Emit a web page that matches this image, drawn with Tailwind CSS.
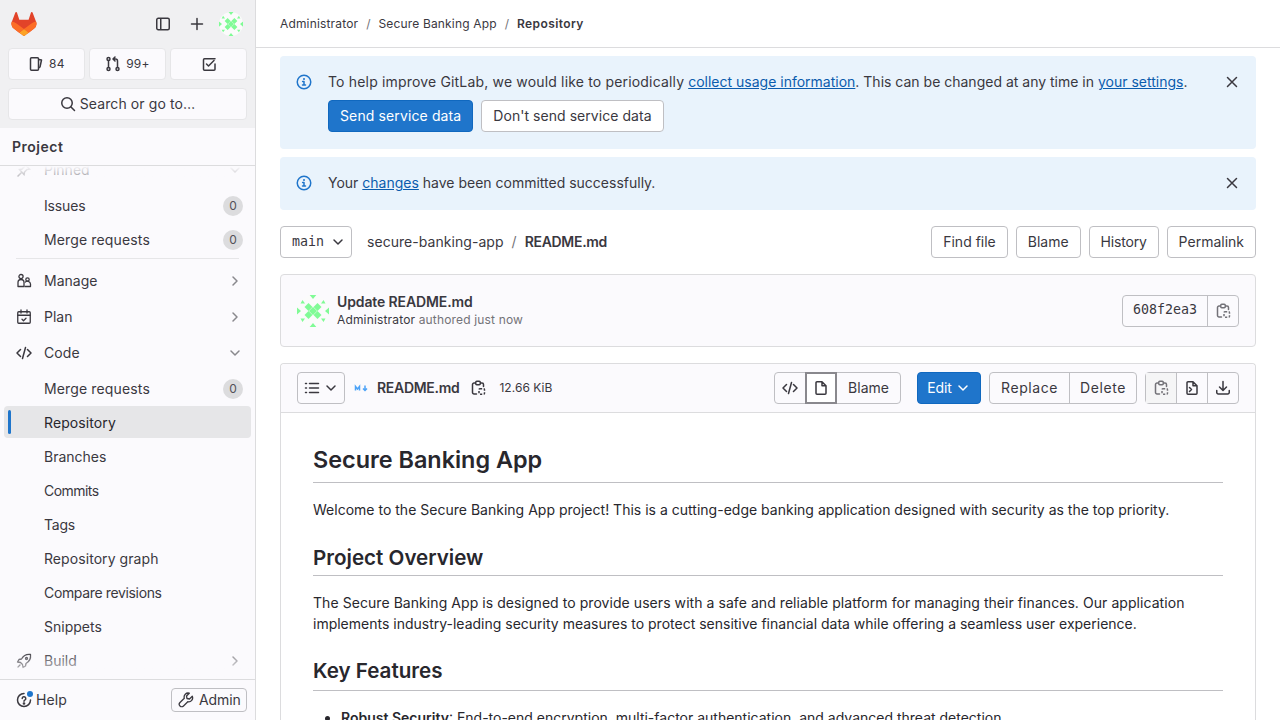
<!DOCTYPE html>
<html lang="en">
<head>
    <meta charset="UTF-8">
    <title>README.md - Repository</title>
    <script src="https://cdn.jsdelivr.net/npm/@tailwindcss/browser@4"></script>
</head>
<body class="h-[720px] overflow-hidden bg-white font-['Inter',sans-serif] text-sm text-[#3a383f]">
    <!-- shared icons -->
    <svg class="hidden">
        <defs>
            <symbol id="i-chev-r" viewBox="0 0 16 16"><path d="M6 4l4 4-4 4" fill="none" stroke="currentColor" stroke-width="1.5" stroke-linecap="round" stroke-linejoin="round"/></symbol>
            <symbol id="i-chev-d" viewBox="0 0 16 16"><path d="M4 6l4 4 4-4" fill="none" stroke="currentColor" stroke-width="1.5" stroke-linecap="round" stroke-linejoin="round"/></symbol>
            <symbol id="i-info" viewBox="0 0 16 16"><circle cx="8" cy="8" r="6.75" fill="none" stroke="currentColor" stroke-width="1.5"/><path d="M6.6 7.4H8v3.6M6.5 11h3" fill="none" stroke="currentColor" stroke-width="1.5" stroke-linecap="round" stroke-linejoin="round"/><circle cx="8" cy="5" r="1" fill="currentColor"/></symbol>
            <symbol id="i-close" viewBox="0 0 16 16"><path d="M3.5 3.5l9 9M12.5 3.5l-9 9" fill="none" stroke="currentColor" stroke-width="1.5" stroke-linecap="round"/></symbol>
            <symbol id="i-code" viewBox="0 0 16 16"><path d="M4.5 4.5L1 8l3.5 3.5M11.5 4.5L15 8l-3.5 3.5M9.5 2.5l-3 11" fill="none" stroke="currentColor" stroke-width="1.5" stroke-linecap="round" stroke-linejoin="round"/></symbol>
            <symbol id="i-copy" viewBox="0 0 16 16"><path d="M5 3H4a1.500 1.500 0 0 0-1.500 1.500v8A1.500 1.500 0 0 0 4 14h2.500M11 3h1a1.500 1.500 0 0 1 1.500 1.500V6.500" fill="none" stroke="currentColor" stroke-width="1.5" stroke-linecap="round"/><rect x="5.750" y="1.250" width="4.500" height="3.500" rx="1" fill="none" stroke="currentColor" stroke-width="1.5"/><rect x="9" y="8.750" width="5.500" height="5.500" rx="1" fill="none" stroke="currentColor" stroke-width="1.5" stroke-dasharray="2.200 1.500"/></symbol>
            <symbol id="i-avatar" viewBox="0 0 32 32"><circle cx="16" cy="16" r="16" fill="#fbfbfb"/><g fill="#80fb96"><path d="M12.700 0h6.600L16 4zM0 12.500L4 16l-4 3.500zM32 12.500L28 16l4 3.500zM12.700 32h6.600L16 28zM3.500 8.500h4.500L5.500 5zM24 8.500h4.500L26.500 5zM3.500 23.500h4.500L5.500 27zM24 23.500h4.500L26.500 27z"/><path d="M11.500 8l4 4-4 4-4-4zM20.500 8l4 4-4 4-4-4zM11.500 16l4 4-4 4-4-4zM20.500 16l4 4-4 4-4-4zM16 12l4 4-4 4-4-4z"/></g></symbol>
        </defs>
    </svg>

    <div class="flex h-[720px]">
        <!-- Sidebar -->
        <aside class="flex h-full w-[256px] shrink-0 flex-col border-r border-[#dcdcde] bg-[#fbfafd]">
            <div class="h-[128px] shrink-0 bg-[#f0f0f2] px-2">
                <div class="flex h-[48px] items-center justify-between pl-[3px] pr-[4px]">
                    <svg class="h-6 w-[26px]" viewBox="0 0 25 24"><path d="m24.507 9.5-.034-.09L21.082.562a.896.896 0 0 0-1.694.091l-2.29 7.01H7.825L5.535.653a.898.898 0 0 0-1.694-.09L.451 9.411.416 9.5a6.297 6.297 0 0 0 2.09 7.278l.012.01.03.022 5.16 3.867 2.56 1.935 1.554 1.176a1.051 1.051 0 0 0 1.268 0l1.555-1.176 2.56-1.935 5.197-3.89.014-.01A6.297 6.297 0 0 0 24.507 9.5Z" fill="#E24329"/><path d="m24.507 9.5-.034-.09a11.44 11.44 0 0 0-4.56 2.051l-7.447 5.632 4.742 3.584 5.197-3.89.014-.01A6.297 6.297 0 0 0 24.507 9.5Z" fill="#FC6D26"/><path d="m7.707 20.677 2.56 1.935 1.555 1.176a1.051 1.051 0 0 0 1.268 0l1.555-1.176 2.56-1.935-4.743-3.584-4.755 3.584Z" fill="#FCA326"/><path d="M5.01 11.461a11.43 11.43 0 0 0-4.56-2.05L.416 9.5a6.297 6.297 0 0 0 2.09 7.278l.012.01.03.022 5.16 3.867 4.745-3.584-7.444-5.632Z" fill="#FC6D26"/></svg>
                    <div class="flex items-center gap-[18px]">
                        <svg class="h-4 w-4" viewBox="0 0 16 16" fill="none" stroke="currentColor" stroke-width="1.5"><rect x="1.75" y="2.25" width="12.5" height="11.5" rx="1.5"/><path d="M5.75 2.25v11.5"/></svg>
                        <svg class="h-4 w-4" viewBox="0 0 16 16" fill="none" stroke="currentColor" stroke-width="1.5" stroke-linecap="round"><path d="M8 2.5v11M2.5 8h11"/></svg>
                        <svg class="-ml-1 h-6 w-6"><use href="#i-avatar"/></svg>
                    </div>
                </div>
                <div class="grid grid-cols-3 gap-1">
                    <div class="flex h-[32px] items-center justify-center gap-[5px] rounded border border-[#e6e6e8] bg-[#fbfafd] text-xs tracking-[0.3px]">
                        <svg class="h-4 w-4" viewBox="0 0 16 16" fill="none" stroke="currentColor" stroke-width="1.5" stroke-linejoin="round"><path d="M3.5 1.75h6a1 1 0 0 1 1 1v10.5a1 1 0 0 1-1 1h-6a1 1 0 0 1-1-1V2.75a1 1 0 0 1 1-1z"/><path d="M10.5 3.5l3 .5-1.5 7-1.5 1"/></svg>84
                    </div>
                    <div class="flex h-[32px] items-center justify-center gap-[5px] rounded border border-[#e6e6e8] bg-[#fbfafd] text-xs tracking-[0.3px]">
                        <svg class="h-4 w-4" viewBox="0 0 16 16" fill="none" stroke="currentColor" stroke-width="1.5" stroke-linecap="round" stroke-linejoin="round"><circle cx="3.5" cy="3" r="1.5"/><circle cx="3.5" cy="13" r="1.5"/><circle cx="12.5" cy="13" r="1.5"/><path d="M3.5 4.5v7M12.5 11.5V5a2 2 0 0 0-2-2H8.5M10 1L8 3l2 2"/></svg>99+
                    </div>
                    <div class="flex h-[32px] items-center justify-center rounded border border-[#e6e6e8] bg-[#fbfafd]">
                        <svg class="h-4 w-4" viewBox="0 0 16 16" fill="none" stroke="currentColor" stroke-width="1.5" stroke-linecap="round" stroke-linejoin="round"><path d="M14 2.75H3.5a1 1 0 0 0-1 1v9.5a1 1 0 0 0 1 1h9.5a1 1 0 0 0 1-1V8"/><path d="M5.5 8l2 2 5.5-5.5"/></svg>
                    </div>
                </div>
                <div class="mt-2 flex h-[32px] items-center justify-center gap-[4px] rounded border border-[#e6e6e8] bg-[#fbfafd] tracking-[0.1px]">
                    <svg class="h-4 w-4" viewBox="0 0 16 16" fill="none" stroke="currentColor" stroke-width="1.5" stroke-linecap="round"><circle cx="7" cy="7" r="5.25"/><path d="M11 11l3.5 3.5"/></svg>Search or go to…
                </div>
            </div>
            <div class="flex h-[38px] shrink-0 items-center border-b border-[#dcdcde] px-3 text-sm font-semibold tracking-[0.5px]">Project</div>

            <!-- Nav (scrolled) -->
            <div class="relative min-h-0 flex-1 overflow-hidden">
                <nav class="-mt-[13px] px-1">
                    <div class="mb-[2px] flex h-[34px] items-center rounded pl-3 pr-2">
                        <svg class="mr-3 h-4 w-4 text-[#737278]" viewBox="0 0 16 16" fill="none" stroke="currentColor" stroke-width="1.5" stroke-linecap="round"><path d="M9 2.5l4.5 4.5-2.5.5-2.5 2.5-.5 2.5L3.5 7.5 6 7l2.5-2.5zM5.5 10.5L2 14"/></svg>
                        <span class="flex-1">Pinned</span>
                        <svg class="h-4 w-4 text-[#89888d]"><use href="#i-chev-d"/></svg>
                    </div>
                    <a class="flex h-[34px] items-center pl-10 pr-2 tracking-[-0.15px]">Issues<span class="ml-auto flex h-5 min-w-5 items-center justify-center rounded-full bg-[#dcdcde] text-xs text-[#535158]">0</span></a>
                    <a class="flex h-[34px] items-center pl-10 pr-2 tracking-[0.14px]">Merge requests<span class="ml-auto flex h-5 min-w-5 items-center justify-center rounded-full bg-[#dcdcde] text-xs text-[#535158]">0</span></a>
                    <div class="mx-3 mt-[1px] mb-[4px] h-px bg-[#e6e6e8]"></div>
                    <a class="flex h-[36px] items-center pl-3 pr-2">
                        <svg class="mr-3 h-4 w-4" viewBox="0 0 16 16" fill="none" stroke="currentColor" stroke-width="1.3" stroke-linejoin="round"><circle cx="5" cy="3.600" r="2.100"/><path d="M2 13.500V9.500a3 3 0 0 1 6 0v4z"/><circle cx="11.500" cy="6.500" r="1.700"/><path d="M8.500 13.500h6v-2.500a3 3 0 0 0-5.500-1.500"/></svg>
                        <span class="flex-1">Manage</span><svg class="h-4 w-4 text-[#89888d]"><use href="#i-chev-r"/></svg>
                    </a>
                    <a class="flex h-[36px] items-center pl-3 pr-2">
                        <svg class="mr-3 h-4 w-4" viewBox="0 0 16 16" fill="none" stroke="currentColor" stroke-width="1.3" stroke-linecap="round" stroke-linejoin="round"><rect x="1.75" y="2.75" width="12.5" height="11.5" rx="1"/><path d="M1.75 6.25h12.5M5 1v3M11 1v3M6 10.25l1.5 1.5 2.5-2.5"/></svg>
                        <span class="flex-1">Plan</span><svg class="h-4 w-4 text-[#89888d]"><use href="#i-chev-r"/></svg>
                    </a>
                    <a class="mb-px flex h-[36px] items-center pl-3 pr-2">
                        <svg class="mr-3 h-4 w-4"><use href="#i-code"/></svg>
                        <span class="flex-1 tracking-[0.1px]">Code</span><svg class="h-4 w-4 text-[#89888d]"><use href="#i-chev-d"/></svg>
                    </a>
                    <a class="flex h-[34px] items-center pl-10 pr-2 tracking-[0.14px]">Merge requests<span class="ml-auto flex h-5 min-w-5 items-center justify-center rounded-full bg-[#dcdcde] text-xs text-[#535158]">0</span></a>
                    <a class="relative mb-[2px] flex h-8 items-center rounded bg-[#e6e6e8] pl-10 pr-2 pt-[2px] tracking-[0.1px] text-[#28272d]"><span class="absolute left-1 top-1 h-6 w-[3px] rounded-full bg-[#1f75cb]"></span>Repository</a>
                    <a class="flex h-[34px] items-center pl-10">Branches</a>
                    <a class="flex h-[34px] items-center pl-10 tracking-[-0.55px]">Commits</a>
                    <a class="flex h-[34px] items-center pl-10 tracking-[-0.2px]">Tags</a>
                    <a class="flex h-[34px] items-center pl-10 tracking-[0.07px]">Repository graph</a>
                    <a class="flex h-[34px] items-center pl-10 tracking-[-0.35px]">Compare revisions</a>
                    <a class="flex h-[34px] items-center pl-10">Snippets</a>
                    <a class="flex h-[34px] items-center pl-3 pr-2">
                        <svg class="mr-3 h-4 w-4" viewBox="0 0 16 16" fill="none" stroke="currentColor" stroke-width="1.3" stroke-linejoin="round" stroke-linecap="round"><path d="M14.5 1.5c-4-.5-7 1-9 4.5L3 6.5 1.5 9l3 .5 2 2 .5 3L9.5 13l.5-2.5c3.500-2 5-5 4.500-9z"/><circle cx="10.500" cy="5.500" r="1"/><path d="M2 14l2-2"/></svg>
                        <span class="flex-1">Build</span><svg class="h-4 w-4 text-[#89888d]"><use href="#i-chev-r"/></svg>
                    </a>
                </nav>
                <div class="absolute inset-x-0 top-0 h-[24px] bg-gradient-to-b from-[#fbfafd] to-[#fbfafd]/0"></div>
                <div class="absolute inset-x-0 bottom-0 h-[28px] bg-gradient-to-t from-[#fbfafd] to-[#fbfafd]/0"></div>
            </div>

            <div class="flex h-[41px] shrink-0 items-center justify-between border-t border-[#dcdcde] pl-4 pr-2">
                <div class="flex items-center gap-[4px] tracking-[0.1px]">
                    <span class="relative h-4 w-4">
                        <svg class="h-4 w-4" viewBox="0 0 16 16" fill="none" stroke="currentColor" stroke-width="1.5" stroke-linecap="round"><path d="M14.5 8A6.500 6.500 0 1 1 8 1.500"/><path d="M6.200 6.500A1.800 1.800 0 1 1 8.800 8.100c-.5.300-.8.700-.8 1.200"/><circle cx="8" cy="11.500" r=".6" fill="currentColor"/></svg>
                        <span class="absolute -right-[1px] -top-[1px] h-[6px] w-[6px] rounded-full bg-[#1f75cb]"></span>
                    </span>
                    Help
                </div>
                <div class="flex h-6 w-[76px] items-center gap-[5px] rounded border border-[#bfbfc3] pl-[6px] tracking-[-0.1px]">
                    <svg class="h-4 w-4" viewBox="0 0 16 16" fill="none" stroke="currentColor" stroke-width="1.3" stroke-linejoin="round"><path d="M14.300 4.200l-2.800 2.800-2.500-.5-.5-2.500 2.800-2.800a4 4 0 0 0-5 5L2 10.500a2.400 2.400 0 0 0 3.500 3.500l4.300-4.300a4 4 0 0 0 4.500-5.500z"/></svg>
                    Admin
                </div>
            </div>
        </aside>

        <!-- Main -->
        <main class="min-w-0 flex-1 overflow-hidden">
            <div class="flex h-[48px] items-center gap-2 border-b border-[#dcdcde] px-6 text-xs">
                <span class="tracking-[0.16px]">Administrator</span><span class="text-[#737278]">/</span>
                <span class="tracking-[0.16px]">Secure Banking App</span><span class="text-[#737278]">/</span>
                <span class="font-semibold tracking-[0.4px]">Repository</span>
            </div>
            <div class="px-6 pt-2">
                <!-- Alerts -->
                <div class="flex rounded bg-[#e9f3fc] pb-[17px] pl-4 pr-4 pt-[15px]">
                    <svg class="mr-4 mt-[3px] h-4 w-4 shrink-0 text-[#1f75cb]"><use href="#i-info"/></svg>
                    <div class="flex-1">
                        <p class="leading-[21px]"><span class="tracking-[0.17px]">To help improve GitLab, we would like to periodically</span> <a class="text-[#0b5cad] underline">collect usage information</a>. This can be changed at any time in <a class="text-[#0b5cad] underline">your settings</a>.</p>
                        <div class="mt-2 flex gap-2">
                            <button class="h-8 rounded border border-[#1068bf] bg-[#1f75cb] px-[11px] tracking-[0.12px] text-white">Send service data</button>
                            <button class="h-8 rounded border border-[#bfbfc3] bg-white px-[11px] tracking-[0.05px]">Don't send service data</button>
                        </div>
                    </div>
                    <svg class="mt-[3px] h-4 w-4 shrink-0"><use href="#i-close"/></svg>
                </div>
                <div class="mt-2 flex items-start rounded bg-[#e9f3fc] pb-[17px] pl-4 pr-4 pt-[15px]">
                    <svg class="mr-4 mt-[3px] h-4 w-4 shrink-0 text-[#1f75cb]"><use href="#i-info"/></svg>
                    <p class="flex-1 leading-[21px]">Your <a class="text-[#0b5cad] underline">changes</a> have been committed successfully.</p>
                    <svg class="mt-[3px] h-4 w-4 shrink-0"><use href="#i-close"/></svg>
                </div>

                <!-- Tree row -->
                <div class="mt-4 flex h-8 items-center">
                    <div class="flex h-8 w-[72px] items-center justify-between rounded border border-[#bfbfc3] pl-[11px] pr-[5px] font-['DejaVu_Sans_Mono',monospace] text-[13.3px]">main<svg class="h-4 w-4"><use href="#i-chev-d"/></svg></div>
                    <div class="ml-[15px] flex gap-2"><span class="tracking-[0.05px]">secure-banking-app</span><span class="text-[#737278]">/</span><span class="font-semibold tracking-[-0.3px]">README.md</span></div>
                    <div class="ml-auto flex gap-2">
                        <button class="h-8 rounded border border-[#bfbfc3] px-[11px]">Find file</button>
                        <button class="h-8 rounded border border-[#bfbfc3] px-[11px]">Blame</button>
                        <button class="h-8 w-[70px] rounded border border-[#bfbfc3] tracking-[-0.2px]">History</button>
                        <button class="h-8 rounded border border-[#bfbfc3] px-[11px]">Permalink</button>
                    </div>
                </div>

                <!-- Commit -->
                <div class="mt-4 flex h-[73px] items-center rounded border border-[#dcdcde] bg-[#fbfafd] pl-4 pr-4">
                    <svg class="h-8 w-8 shrink-0"><use href="#i-avatar"/></svg>
                    <div class="ml-2">
                        <div class="font-semibold leading-[18px] tracking-[-0.12px]">Update README.md</div>
                        <div class="text-xs leading-[18px] tracking-[0.16px]">Administrator <span class="text-[#737278]">authored just now</span></div>
                    </div>
                    <div class="ml-auto flex h-8 rounded border border-[#bfbfc3] bg-[#fbfafd]">
                        <span class="flex w-[85px] items-center justify-center border-r border-[#bfbfc3] font-['DejaVu_Sans_Mono',monospace] text-[13.3px]">608f2ea3</span>
                        <span class="flex w-[30px] items-center justify-center text-[#737278]"><svg class="h-4 w-4"><use href="#i-copy"/></svg></span>
                    </div>
                </div>

                <!-- File -->
                <div class="mt-4 rounded-t border border-b-0 border-[#dcdcde]">
                    <div class="flex h-[49px] items-center rounded-t border-b border-[#dcdcde] bg-[#fbfafd] px-4">
                        <div class="flex h-8 w-12 items-center justify-center gap-[3px] rounded border border-[#bfbfc3]">
                            <svg class="h-4 w-4" viewBox="0 0 16 16" fill="none" stroke="currentColor" stroke-width="1.5" stroke-linecap="round"><path d="M5.500 3.500h9M5.500 8h9M5.500 12.500h9M1.500 3.500h1M1.500 8h1M1.500 12.500h1"/></svg>
                            <svg class="h-4 w-4"><use href="#i-chev-d"/></svg>
                        </div>
                        <svg class="ml-[9px] h-4 w-4 text-[#4da3f7]" viewBox="0 0 16 16" fill="none" stroke="currentColor" stroke-width="1.500"><path d="M1.500 10.500v-4l2 2.500 2-2.500v4M11 5.500v4.500M9 8.500l2 2 2-2"/></svg>
                        <span class="ml-[7px] font-semibold tracking-[-0.3px]">README.md</span>
                        <svg class="ml-[11px] h-4 w-4"><use href="#i-copy"/></svg>
                        <span class="ml-[13px] text-xs tracking-[0.05px]">12.66 KiB</span>

                        <div class="ml-auto flex h-8 rounded border border-[#bfbfc3]">
                            <span class="flex w-[30px] items-center justify-center"><svg class="h-4 w-4"><use href="#i-code"/></svg></span>
                            <span class="-my-px flex w-8 items-center justify-center border-2 border-[#89888d] bg-white"><svg class="h-4 w-4" viewBox="0 0 16 16" fill="none" stroke="currentColor" stroke-width="1.5" stroke-linejoin="round"><path d="M9 1.750H4a1 1 0 0 0-1 1v10.500a1 1 0 0 0 1 1h8a1 1 0 0 0 1-1V5.750zM9 1.750v4h4"/></svg></span>
                            <span class="flex w-[63px] items-center justify-center">Blame</span>
                        </div>
                        <button class="ml-4 flex h-8 w-16 items-center justify-center gap-[3px] rounded border border-[#1068bf] bg-[#1f75cb] text-white tracking-[-0.1px]">Edit<svg class="h-4 w-4"><use href="#i-chev-d"/></svg></button>
                        <div class="ml-2 flex h-8 rounded border border-[#bfbfc3]">
                            <span class="flex w-[80px] items-center justify-center border-r border-[#bfbfc3] tracking-[0.55px]">Replace</span>
                            <span class="flex w-[66px] items-center justify-center tracking-[0.6px]">Delete</span>
                        </div>
                        <div class="ml-2 flex h-8 rounded border border-[#bfbfc3]">
                            <span class="flex w-[31px] items-center justify-center border-r border-[#bfbfc3] bg-[#f5f5f6] text-[#737278]"><svg class="h-4 w-4"><use href="#i-copy"/></svg></span>
                            <span class="flex w-[31px] items-center justify-center border-r border-[#bfbfc3]"><svg class="h-4 w-4" viewBox="0 0 16 16" fill="none" stroke="currentColor" stroke-width="1.5" stroke-linejoin="round" stroke-linecap="round"><path d="M9 1.750H4a1 1 0 0 0-1 1v10.500a1 1 0 0 0 1 1h8a1 1 0 0 0 1-1V5.750zM9 1.750v4h4M5.500 7.500l2 2-2 2"/></svg></span>
                            <span class="flex w-[30px] items-center justify-center"><svg class="h-4 w-4" viewBox="0 0 16 16" fill="none" stroke="currentColor" stroke-width="1.5" stroke-linejoin="round" stroke-linecap="round"><path d="M8 1.500v8.500M4.500 7l3.500 3.500L11.500 7M1.750 10.500v2a1.500 1.500 0 0 0 1.500 1.500h9.500a1.500 1.500 0 0 0 1.500-1.500v-2"/></svg></span>
                        </div>
                    </div>
                    <article class="px-8 pt-[29px] text-[#28272d]">
                        <h1 class="border-b border-[#bfbfc3] pb-[4px] text-[23.4px] leading-[36px] font-semibold">Secure Banking App</h1>
                        <p class="mt-[16px] leading-[21px] tracking-[0.01px]">Welcome to the Secure Banking App project! This is a cutting-edge banking application designed with security as the top priority.</p>
                        <h2 class="mt-[23px] border-b border-[#bfbfc3] pb-[2px] text-[20.6px] leading-[30px] font-semibold">Project Overview</h2>
                        <p class="mt-[16px] leading-[21px]"><span class="tracking-[0.06px]">The Secure Banking App is designed to provide users with a safe and reliable platform for managing their finances. Our application</span> implements industry-leading security measures to protect sensitive financial data while offering a seamless user experience.</p>
                        <h2 class="mt-[22px] border-b border-[#bfbfc3] pb-[4px] text-[20.6px] leading-[30px] font-semibold">Key Features</h2>
                        <ul class="mt-[16px] list-disc pl-7 leading-[21px]">
                            <li><strong class="font-semibold">Robust Security</strong>: End-to-end encryption, multi-factor authentication, and advanced threat detection.</li>
                        </ul>
                    </article>
                </div>
            </div>
        </main>
    </div>
</body>
</html>
